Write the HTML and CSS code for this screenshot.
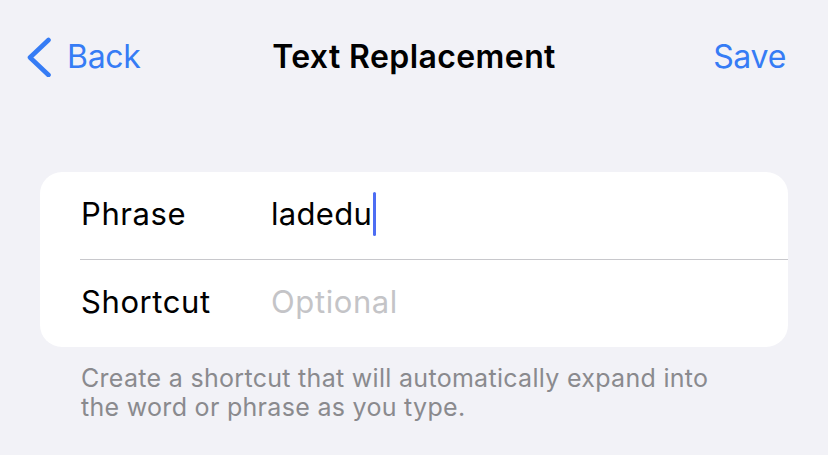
FILE: index.html
```html
<!DOCTYPE html>
<html>
<head>
<meta charset="utf-8">
<link rel="stylesheet" href="styles.css">
</head>
<body>
<div class="screen">
  <header class="nav">
    <div class="nav-left">
      <svg class="chev" width="26" height="40" viewBox="0 0 26 40">
        <polyline points="21.5,3 3,20.5 21.5,38" fill="none" stroke="#367cf5" stroke-width="4.6" stroke-linecap="round" stroke-linejoin="round"/>
      </svg>
      <span class="back">Back</span>
    </div>
    <div class="title">Text Replacement</div>
    <div class="nav-right"><span class="save">Save</span></div>
  </header>

  <section class="card">
    <div class="row">
      <div class="label">Phrase</div>
      <div class="value">ladedu<span class="caret"></span></div>
    </div>
    <div class="sep"></div>
    <div class="row">
      <div class="label">Shortcut</div>
      <div class="value placeholder">Optional</div>
    </div>
  </section>

  <p class="note">Create a shortcut that will automatically expand into<br>the word or phrase as you type.</p>
</div>
</body>
</html>
```

FILE: styles.css
```css
html, body {
  margin: 0;
  padding: 0;
  background: #f2f2f7;
}
body {
  font-family: "Inter", "Liberation Sans", sans-serif;
  color: #000;
  width: 828px;
  height: 455px;
  overflow: hidden;
}
.screen {
  display: flex;
  flex-direction: column;
}
.nav {
  display: grid;
  grid-template-columns: 1fr auto 1fr;
  align-items: center;
  padding: 37px 25px 0 25px;
  height: 40px;
}
.nav-left {
  display: flex;
  align-items: center;
  gap: 14px;
  padding-left: 2px;
}
.chev {
  display: block;
  margin-top: 0;
}
.back, .save {
  color: #367cf5;
  font-size: 32px;
  line-height: 40px;
  letter-spacing: -0.3px;
}
.nav-right {
  display: flex;
  justify-content: flex-end;
  padding-right: 17px;
}
.title {
  font-size: 32px;
  line-height: 40px;
  font-weight: 600;
  letter-spacing: 0.4px;
}
.card {
  margin: 95px 40px 0 40px;
  background: #fff;
  border-radius: 22px;
  overflow: hidden;
}
.row {
  display: flex;
  align-items: center;
  height: 87px;
  padding-left: 41px;
}
.label {
  width: 190px;
  font-size: 31px;
  line-height: 40px;
  letter-spacing: 0.6px;
  margin-top: -3px;
}
.value {
  font-size: 31px;
  line-height: 40px;
  letter-spacing: 0.3px;
  display: flex;
  align-items: center;
  margin-top: -3px;
}
.placeholder {
  color: #c4c4c7;
  letter-spacing: 0.6px;
}
.caret {
  display: inline-block;
  width: 3px;
  height: 44px;
  border-radius: 2px;
  background: #4d6df3;
  margin-left: 1px;
  margin-top: 0;
}
.sep {
  height: 1px;
  background: #c8c8cc;
  margin-left: 40px;
}
.note {
  margin: 17px 0 0 81px;
  font-size: 25px;
  line-height: 29px;
  letter-spacing: 0.3px;
  color: #8a8a8e;
}
```
